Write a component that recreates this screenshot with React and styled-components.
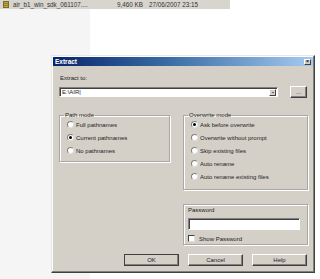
import styled, { createGlobalStyle } from "styled-components";

const GlobalStyle = createGlobalStyle`
  html, body {
    margin: 0;
    padding: 0;
    background: #ffffff;
  }
  body {
    font-family: "Liberation Sans", Arial, sans-serif;
    color: #000;
  }
`;

const Page = styled.div`
  width: 320px;
  height: 279px;
  overflow: hidden;
  display: flex;
  flex-direction: column;
  background: linear-gradient(to right, #f5f5f5 0, #f5f5f5 90px, #ffffff 90px);
`;

const FileRow = styled.div`
  width: 230px;
  height: 9px;
  flex-shrink: 0;
  background: #d8d5cf;
  display: flex;
  align-items: center;
  font-size: 6.3px;
  color: #333;
  white-space: nowrap;
`;

const FileIcon = styled.div`
  width: 6px;
  height: 7px;
  margin-left: 3px;
  margin-right: 4px;
  background: repeating-linear-gradient(to bottom, #c9a63a 0 1px, #8c7a3a 1px 2px);
  border: 1px solid #7a6a2a;
  box-sizing: border-box;
`;

const Cell = styled.span`
  width: ${(p) => p.$w}px;
  text-align: ${(p) => p.$align || "left"};
`;

const Desktop = styled.div`
  flex: 1;
  padding: 46px 0 0 51px;
`;

const Window = styled.div`
  width: 264px;
  height: 218px;
  box-sizing: border-box;
  background: #d4d0c8;
  border: 1px solid;
  border-color: #e8e6e0 #404040 #404040 #e8e6e0;
  box-shadow: inset -1px -1px #808080, inset 1px 1px #ffffff;
  padding: 1px;
  display: flex;
  flex-direction: column;
`;

const TitleBar = styled.div`
  height: 9px;
  background: linear-gradient(to right, #0a246a 0%, #3a6ea5 45%, #a6caf0 100%);
  display: flex;
  align-items: center;
  justify-content: space-between;
  padding: 0 2px 0 2px;
`;

const Title = styled.span`
  color: #fff;
  font-weight: bold;
  font-size: 6.5px;
`;

const CloseBox = styled.div`
  width: 7px;
  height: 6px;
  box-sizing: border-box;
  background: #d4d0c8;
  border: 1px solid;
  border-color: #fff #404040 #404040 #fff;
  display: flex;
  align-items: center;
  justify-content: center;
  font-size: 5px;
  line-height: 1;
  font-weight: bold;
`;

const Body = styled.div`
  flex: 1;
  padding: 9px 6px 0 6px;
  display: flex;
  flex-direction: column;
  font-size: 6px;
  color: #222;
`;

const Label = styled.div`
  height: 7px;
  line-height: 7px;
  margin-bottom: 4px;
  margin-left: 1px;
`;

const ComboRow = styled.div`
  display: flex;
  align-items: center;
  gap: 12px;
`;

const Combo = styled.div`
  width: 220px;
  height: 10px;
  box-sizing: border-box;
  background: #fff;
  border: 1px solid;
  border-color: #808080 #fff #fff #808080;
  box-shadow: inset 1px 1px #404040;
  display: flex;
  align-items: center;
  justify-content: space-between;
  padding-left: 2px;
  font-size: 6px;
`;

const ComboArrow = styled.div`
  width: 7px;
  height: 7px;
  box-sizing: border-box;
  margin-right: 1px;
  background: #d4d0c8;
  border: 1px solid;
  border-color: #fff #404040 #404040 #fff;
  display: flex;
  align-items: center;
  justify-content: center;
  &::after {
    content: "";
    border-left: 1.5px solid transparent;
    border-right: 1.5px solid transparent;
    border-top: 1.5px solid #000;
  }
`;

const Button = styled.div`
  width: ${(p) => p.$w || 55}px;
  height: ${(p) => p.$h || 12}px;
  box-sizing: border-box;
  background: #d4d0c8;
  border: 1px solid;
  border-color: #fff #404040 #404040 #fff;
  box-shadow: inset -1px -1px #808080;
  display: flex;
  align-items: center;
  justify-content: center;
  font-size: 6px;
  color: #222;
  ${(p) => p.$default && "outline: 1px solid #404040; outline-offset: -1px;"}
`;

const Columns = styled.div`
  display: grid;
  grid-template-columns: 111px 125px;
  column-gap: 13px;
  margin-top: 14px;
  align-items: start;
`;

const Column = styled.div`
  display: flex;
  flex-direction: column;
  gap: 14px;
`;

const Group = styled.fieldset`
  margin: 0;
  padding: 3px 0 5px 7px;
  height: ${(p) => p.$h}px;
  box-sizing: border-box;
  border: 1px solid #a8a8a8;
  box-shadow: 1px 1px #fff, inset 1px 1px #fff;
  display: flex;
  flex-direction: column;
  gap: 6px;
  min-width: 0;
`;

const Legend = styled.legend`
  padding: 0 1px;
  margin-left: -3px;
  font-size: 6px;
  line-height: 6px;
`;

const Option = styled.label`
  display: flex;
  align-items: center;
  gap: 2px;
  height: 7px;
  white-space: nowrap;
`;

const RadioDot = styled.span`
  width: 7px;
  height: 7px;
  box-sizing: border-box;
  border-radius: 50%;
  background: #fff;
  border: 1px solid;
  border-color: #808080 #e0e0e0 #e0e0e0 #808080;
  display: flex;
  align-items: center;
  justify-content: center;
  &::after {
    content: "";
    width: 3px;
    height: 3px;
    border-radius: 50%;
    background: ${(p) => (p.$on ? "#000" : "transparent")};
  }
`;

const CheckBox = styled.span`
  width: 7px;
  height: 7px;
  box-sizing: border-box;
  background: #fff;
  border: 1px solid;
  border-color: #404040 #e0e0e0 #e0e0e0 #404040;
  margin-right: 2px;
`;

const Field = styled.div`
  width: 112px;
  height: 12px;
  box-sizing: border-box;
  background: #fff;
  border: 1px solid;
  border-color: #808080 #fff #fff #808080;
  box-shadow: inset 1px 1px #404040;
`;

const PasswordGroup = styled(Group)`
  padding: 1px 0 4px 4px;
  gap: 5px;
`;

const Buttons = styled.div`
  display: flex;
  justify-content: flex-end;
  gap: 9px;
  margin-top: 9px;
`;

function Radio({ on, children }) {
  return (
    <Option>
      <RadioDot $on={on} />
      {children}
    </Option>
  );
}

export default function App() {
  return (
    <>
      <GlobalStyle />
      <Page>
        <FileRow>
          <FileIcon />
          <Cell $w={80}>air_b1_win_sdk_061107....</Cell>
          <Cell $w={50} $align="right">9,460 KB</Cell>
          <Cell $w={6} />
          <Cell $w={60}>27/06/2007 23:15</Cell>
        </FileRow>
        <Desktop>
          <Window>
            <TitleBar>
              <Title>Extract</Title>
              <CloseBox>×</CloseBox>
            </TitleBar>
            <Body>
              <Label>Extract to:</Label>
              <ComboRow>
                <Combo>
                  <span>E:\AIR|</span>
                  <ComboArrow />
                </Combo>
                <Button $w={17} $h={12}>...</Button>
              </ComboRow>
              <Columns>
                <Column>
                  <Group $h={50}>
                    <Legend>Path mode</Legend>
                    <Radio>Full pathnames</Radio>
                    <Radio on>Current pathnames</Radio>
                    <Radio>No pathnames</Radio>
                  </Group>
                </Column>
                <Column>
                  <Group $h={78}>
                    <Legend>Overwrite mode</Legend>
                    <Radio on>Ask before overwrite</Radio>
                    <Radio>Overwrite without prompt</Radio>
                    <Radio>Skip existing files</Radio>
                    <Radio>Auto rename</Radio>
                    <Radio>Auto rename existing files</Radio>
                  </Group>
                  <PasswordGroup $h={41}>
                    <Option>Password</Option>
                    <Field />
                    <Option>
                      <CheckBox />
                      Show Password
                    </Option>
                  </PasswordGroup>
                </Column>
              </Columns>
              <Buttons>
                <Button $default>OK</Button>
                <Button>Cancel</Button>
                <Button>Help</Button>
              </Buttons>
            </Body>
          </Window>
        </Desktop>
      </Page>
    </>
  );
}
